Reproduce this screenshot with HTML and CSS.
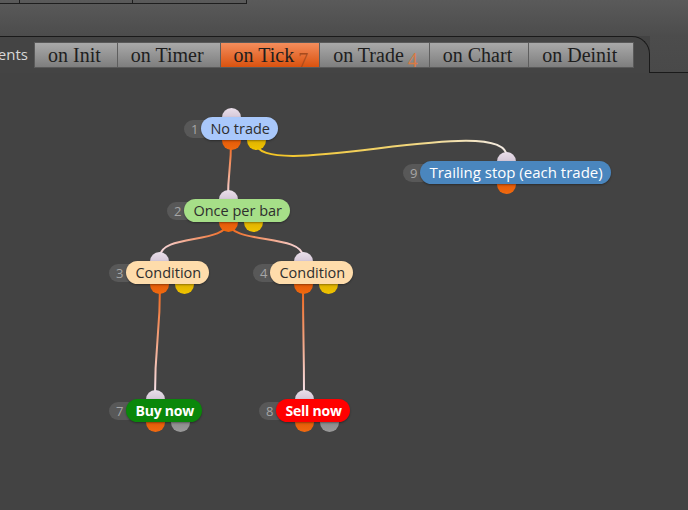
FILE: index.html
```html
<!DOCTYPE html>
<html lang="en">

<head>
    <meta charset="UTF-8">
    <meta name="viewport" content="width=device-width, initial-scale=1.0">
    <title>Strategy Builder</title>
    <link rel="stylesheet" href="styles.css">
</head>

<body>

    <div class="header">
        <div class="grid-edge">
            <span class="cell c1"></span>
            <span class="cell c2"></span>
            <span class="cell c3"></span>
        </div>
    </div>

    <div class="strip">
        <div class="tabs-area">
            <div class="events"><span>Events</span></div>
            <div class="tabs">
                <div class="tab">on Init</div>
                <div class="tab">on Timer</div>
                <div class="tab active">on Tick<span class="count">7</span></div>
                <div class="tab">on Trade<span class="count">4</span></div>
                <div class="tab">on Chart</div>
                <div class="tab">on Deinit</div>
            </div>
        </div>
        <div class="filler"></div>
    </div>

    <div class="canvas">
        <!-- links, drawn in page coordinates -->
        <svg class="links" width="688" height="437" viewBox="0 73 688 437">
            <defs>
                <linearGradient id="g12" gradientUnits="userSpaceOnUse" x1="231" y1="141" x2="228" y2="199">
                    <stop offset="0" stop-color="#f06010" />
                    <stop offset="1" stop-color="#f6dde6" />
                </linearGradient>
                <linearGradient id="g19" gradientUnits="userSpaceOnUse" x1="256" y1="142" x2="507" y2="157">
                    <stop offset="0" stop-color="#f2c21a" />
                    <stop offset="0.6" stop-color="#f2d67a" />
                    <stop offset="1" stop-color="#f4ece6" />
                </linearGradient>
                <linearGradient id="g23" gradientUnits="userSpaceOnUse" x1="228" y1="221" x2="160" y2="257">
                    <stop offset="0" stop-color="#f06010" />
                    <stop offset="1" stop-color="#f6dde6" />
                </linearGradient>
                <linearGradient id="g24" gradientUnits="userSpaceOnUse" x1="228" y1="221" x2="303" y2="257">
                    <stop offset="0" stop-color="#f06010" />
                    <stop offset="1" stop-color="#f6dde6" />
                </linearGradient>
                <linearGradient id="g37" gradientUnits="userSpaceOnUse" x1="160" y1="284" x2="155" y2="395">
                    <stop offset="0" stop-color="#f06010" />
                    <stop offset="1" stop-color="#f6e4ee" />
                </linearGradient>
                <linearGradient id="g48" gradientUnits="userSpaceOnUse" x1="303" y1="284" x2="304" y2="395">
                    <stop offset="0" stop-color="#f06010" />
                    <stop offset="1" stop-color="#f6e4ee" />
                </linearGradient>
            </defs>
            <path d="M231 141 C231 170 228 170 228 199" stroke="url(#g12)" />
            <path d="M256 142 C256 185 507 110 507 157" stroke="url(#g19)" />
            <path d="M228 221 C228 245 160 233 160 257" stroke="url(#g23)" />
            <path d="M228 221 C228 245 303 233 303 257" stroke="url(#g24)" />
            <path d="M160 284 C160 340 155 340 155 395" stroke="url(#g37)" />
            <path d="M303 284 C303 340 304 340 304 395" stroke="url(#g48)" />
        </svg>

        <div class="node n1">
            <span class="sock in"></span>
            <span class="sock out"></span>
            <span class="sock out alt yellow"></span>
            <span class="num">1</span>
            <span class="label blue">No trade</span>
        </div>

        <div class="node n9">
            <span class="sock in"></span>
            <span class="sock out"></span>
            <span class="num">9</span>
            <span class="label steel">Trailing stop (each trade)</span>
        </div>

        <div class="node n2">
            <span class="sock in"></span>
            <span class="sock out"></span>
            <span class="sock out alt yellow"></span>
            <span class="num">2</span>
            <span class="label green">Once per bar</span>
        </div>

        <div class="node n3">
            <span class="sock in"></span>
            <span class="sock out"></span>
            <span class="sock out alt yellow"></span>
            <span class="num">3</span>
            <span class="label peach">Condition</span>
        </div>

        <div class="node n4">
            <span class="sock in"></span>
            <span class="sock out"></span>
            <span class="sock out alt yellow"></span>
            <span class="num">4</span>
            <span class="label peach">Condition</span>
        </div>

        <div class="node n7">
            <span class="sock in"></span>
            <span class="sock out"></span>
            <span class="sock out alt grey"></span>
            <span class="num">7</span>
            <span class="label buy">Buy now</span>
        </div>

        <div class="node n8">
            <span class="sock in"></span>
            <span class="sock out"></span>
            <span class="sock out alt grey"></span>
            <span class="num">8</span>
            <span class="label sell">Sell now</span>
        </div>
    </div>

</body>

</html>
```

FILE: styles.css
```css
/* General Styles */
body {
    margin: 0;
    width: 688px;
    height: 510px;
    overflow: hidden;
    background-color: #434343;
    font-family: 'Open Sans', sans-serif;
}

/* Top band */
.header {
    height: 36px;
    background: linear-gradient(#5a5a5a, #4c4c4c);
}

.grid-edge {
    display: flex;
    height: 4px;
}

.cell {
    height: 3px;
    border-bottom: 1px solid #1e1e1e;
    border-right: 1px solid #1e1e1e;
}

.c1 { width: 19px; }
.c2 { width: 112px; }
.c3 { width: 113px; }

/* Tab strip */
.strip {
    display: flex;
    height: 37px;
}

.tabs-area {
    box-sizing: border-box;
    width: 650px;
    height: 37px;
    display: flex;
    align-items: flex-start;
    padding-top: 5px;
    background-color: #444444;
    border-top: 1px solid #1a1a1a;
    border-right: 1px solid #1a1a1a;
    border-top-right-radius: 18px;
}

.filler {
    flex: 1;
    box-sizing: border-box;
    height: 37px;
    background: linear-gradient(#4c4c4c, #494949);
    border-bottom: 1px solid #1a1a1a;
}

.events {
    width: 28px;
    height: 25px;
    margin-right: 6px;
    display: flex;
    justify-content: flex-end;
    overflow: hidden;
    color: #d8d8d8;
    font-size: 15px;
    line-height: 25px;
    white-space: nowrap;
}

.tabs {
    display: flex;
    border: 1px solid #595959;
}

.tab {
    height: 24px;
    line-height: 24px;
    padding: 0 16px 0 13px;
    font-family: 'Liberation Serif', serif;
    font-size: 20px;
    color: #1e1e1e;
    background: linear-gradient(#a9a9a9, #7e7e7e);
    border-left: 1px solid #5e5e5e;
    white-space: nowrap;
}

.tab:first-child {
    border-left: none;
}

.tab.active {
    background: linear-gradient(#f48d5c, #d9520f);
}

.count {
    position: relative;
    top: 5px;
    margin-left: 4px;
    margin-right: -5px;
    color: #d87a44;
}

.tab.active .count {
    color: #a84a1c;
}

/* Canvas with nodes */
.canvas {
    position: relative;
    height: 437px;
}

.links {
    position: absolute;
    left: 0;
    top: 0;
}

.links path {
    fill: none;
    stroke-width: 2;
}

.node {
    position: absolute;
    display: flex;
    align-items: center;
    height: 23px;
}

.n1 { left: 184px; top: 44px; }
.n9 { left: 403px; top: 88px; }
.n2 { left: 167px; top: 126px; }
.n3 { left: 109px; top: 188px; }
.n4 { left: 253px; top: 188px; }
.n7 { left: 109px; top: 326px; }
.n8 { left: 259px; top: 326px; }

.num {
    position: relative;
    height: 18px;
    line-height: 18px;
    padding: 0 14px 0 7px;
    margin-right: -11px;
    border-radius: 9px;
    background-color: #585858;
    color: #a6a6a6;
    font-size: 13px;
}

.label {
    position: relative;
    height: 23px;
    line-height: 23px;
    padding: 0 8px 0 9px;
    border-radius: 12px;
    font-size: 14.5px;
    color: #2e2e2e;
    white-space: nowrap;
    box-shadow: 0 1px 2px rgba(0, 0, 0, 0.35);
}

.blue { background-color: #a9c8fb; }
.green { background-color: #a6df88; }
.peach { background-color: #fedcab; }

.steel {
    background-color: #4a86be;
    color: #ffffff;
    font-size: 15px;
}

.buy {
    background-color: #0a870a;
    color: #ffffff;
    font-size: 14px;
    font-weight: 700;
    letter-spacing: -0.2px;
}

.sell {
    background-color: #ff0000;
    color: #ffffff;
    font-size: 14px;
    font-weight: 700;
    letter-spacing: -0.2px;
}

/* Sockets */
.sock {
    position: absolute;
    left: 50%;
    width: 19px;
    height: 19px;
    margin-left: -9.5px;
    border-radius: 50%;
}

.sock.in {
    top: -9px;
    background: linear-gradient(#eadfea, #bfb0c6);
}

.sock.out {
    bottom: -10px;
    background: linear-gradient(#d94c00, #f06a10);
}

.sock.alt {
    margin-left: 15.5px;
}

.sock.yellow {
    background: linear-gradient(#cfa000, #f0c400);
}

.sock.grey {
    background: linear-gradient(#7c7c7c, #9a9a9a);
}
```
